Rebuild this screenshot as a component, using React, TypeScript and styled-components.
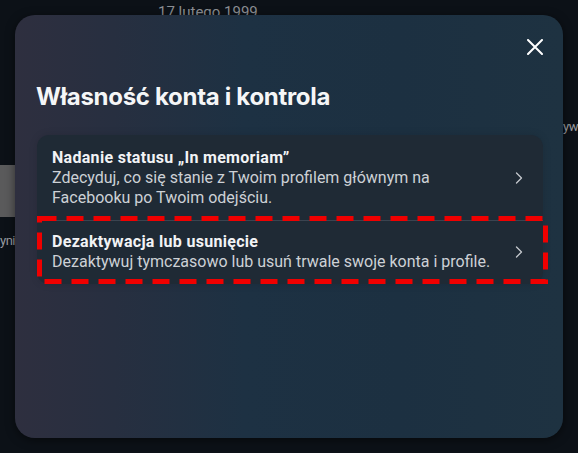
import * as React from "react";
import styled, { createGlobalStyle } from "styled-components";

const GlobalStyle = createGlobalStyle`
  html, body {
    margin: 0;
    padding: 0;
    background: #0c1117;
  }
  body {
    font-family: Roboto, "Noto Sans", sans-serif;
    overflow: hidden;
  }
`;

// faded page that sits behind the dialog
const Page = styled.div`
  position: relative;
  width: 578px;
  height: 453px;
  display: grid;
  grid-template-columns: 15px 1fr 15px;
  color: #8a8d91;
  font-size: 14px;
`;

const LeftRail = styled.div`
  display: flex;
  flex-direction: column;
  padding-top: 165px;
  overflow: hidden;
`;

const GreyBlock = styled.div`
  height: 52px;
  background: #5a5a5b;
`;

const RailText = styled.div`
  margin-top: 16px;
  white-space: nowrap;
  font-size: 13px;
  letter-spacing: -0.5px;
  color: #9a9da1;
`;

const Center = styled.div`
  padding: 3px 0 0 143px;
  font-size: 15px;
  color: #8c8f94;
`;

const RightRail = styled.div`
  padding-top: 119px;
  white-space: nowrap;
  font-size: 13px;
  letter-spacing: -0.5px;
  color: #9a9da1;
`;

const Dialog = styled.div`
  position: absolute;
  top: 15px;
  left: 15px;
  width: 548px;
  height: 423px;
  box-sizing: border-box;
  border-radius: 20px;
  background: linear-gradient(90deg, #2e2f3f 0%, #272f40 18%, #1d3143 42%, #1c3041 70%, #1e3241 100%);
  box-shadow: 0 2px 10px rgba(0, 0, 0, 0.5);
  padding: 22px 20px 0 22px;
  display: flex;
  flex-direction: column;
`;

const TopBar = styled.div`
  display: flex;
  justify-content: flex-end;
  height: 22px;
`;

const CloseButton = styled.button`
  background: none;
  border: 0;
  padding: 0;
  margin-top: 2px;
  width: 16px;
  height: 16px;
  cursor: pointer;
  display: flex;
`;

const Title = styled.h2`
  margin: 23px 0 0 -1px;
  font-family: Inter, Roboto, sans-serif;
  font-weight: 700;
  font-size: 24px;
  line-height: 30px;
  letter-spacing: -0.3px;
  color: #f5f6f7;
`;

const Card = styled.div`
  margin-top: 23px;
  border-radius: 12px;
  background: #1f2a35;
  box-shadow: 0 0 8px rgba(0, 0, 0, 0.12);
  display: flex;
  flex-direction: column;
`;

const Row = styled.div<{ $divided?: boolean }>`
  position: relative;
  display: flex;
  align-items: center;
  gap: 12px;
  padding: ${(p) => (p.$divided ? "11px 20px 12px 15px" : "13px 20px 12px 15px")};
  border-top: ${(p) => (p.$divided ? "1px solid #3b4450" : "none")};
`;

const RowText = styled.div`
  flex: 1;
  display: flex;
  flex-direction: column;
`;

const RowTitle = styled.div`
  font-size: 16px;
  font-weight: 700;
  line-height: 20px;
  letter-spacing: 0.3px;
  color: #f2f3f5;
`;

const RowDesc = styled.div`
  font-size: 16px;
  line-height: 20px;
  color: #cdd1d6;
`;

const Chevron = styled.svg`
  width: 8px;
  height: 12px;
  flex: none;
`;

const Highlight = styled.svg`
  position: absolute;
  top: -5px;
  left: 0;
  width: calc(100% + 5px);
  height: calc(100% + 5px);
  pointer-events: none;
  overflow: visible;
`;

const ChevronIcon = () => (
  <Chevron viewBox="0 0 8 12">
    <path d="M1.5 1 L6.5 6 L1.5 11" fill="none" stroke="#c5c9ce" strokeWidth="1.3" strokeLinecap="round" strokeLinejoin="round" />
  </Chevron>
);

const items = [
  {
    title: "Nadanie statusu „In memoriam”",
    desc: "Zdecyduj, co się stanie z Twoim profilem głównym na Facebooku po Twoim odejściu.",
  },
  {
    title: "Dezaktywacja lub usunięcie",
    desc: "Dezaktywuj tymczasowo lub usuń trwale swoje konta i profile.",
  },
];

export default function App() {
  return (
    <>
      <GlobalStyle />
      <Page>
        <LeftRail>
          <GreyBlock />
          <RailText>yni</RailText>
        </LeftRail>
        <Center>17 lutego 1999</Center>
        <RightRail>yw</RightRail>

        <Dialog>
          <TopBar>
            <CloseButton aria-label="Zamknij">
              <svg width="16" height="16" viewBox="0 0 16 16">
                <path d="M1 1 L15 15 M15 1 L1 15" stroke="#ffffff" strokeWidth="2" strokeLinecap="round" />
              </svg>
            </CloseButton>
          </TopBar>
          <Title>Własność konta i kontrola</Title>
          <Card>
            {items.map((it, i) => (
              <Row key={it.title} $divided={i > 0}>
                <RowText>
                  <RowTitle>{it.title}</RowTitle>
                  <RowDesc>{it.desc}</RowDesc>
                </RowText>
                <ChevronIcon />
                {i === 1 && (
                  <Highlight>
                    <rect x="2.5" y="2.5" width="calc(100% - 5px)" height="calc(100% - 5px)" fill="none" stroke="#f00000" strokeWidth="5" strokeDasharray="17 10" />
                  </Highlight>
                )}
              </Row>
            ))}
          </Card>
        </Dialog>
      </Page>
    </>
  );
}
